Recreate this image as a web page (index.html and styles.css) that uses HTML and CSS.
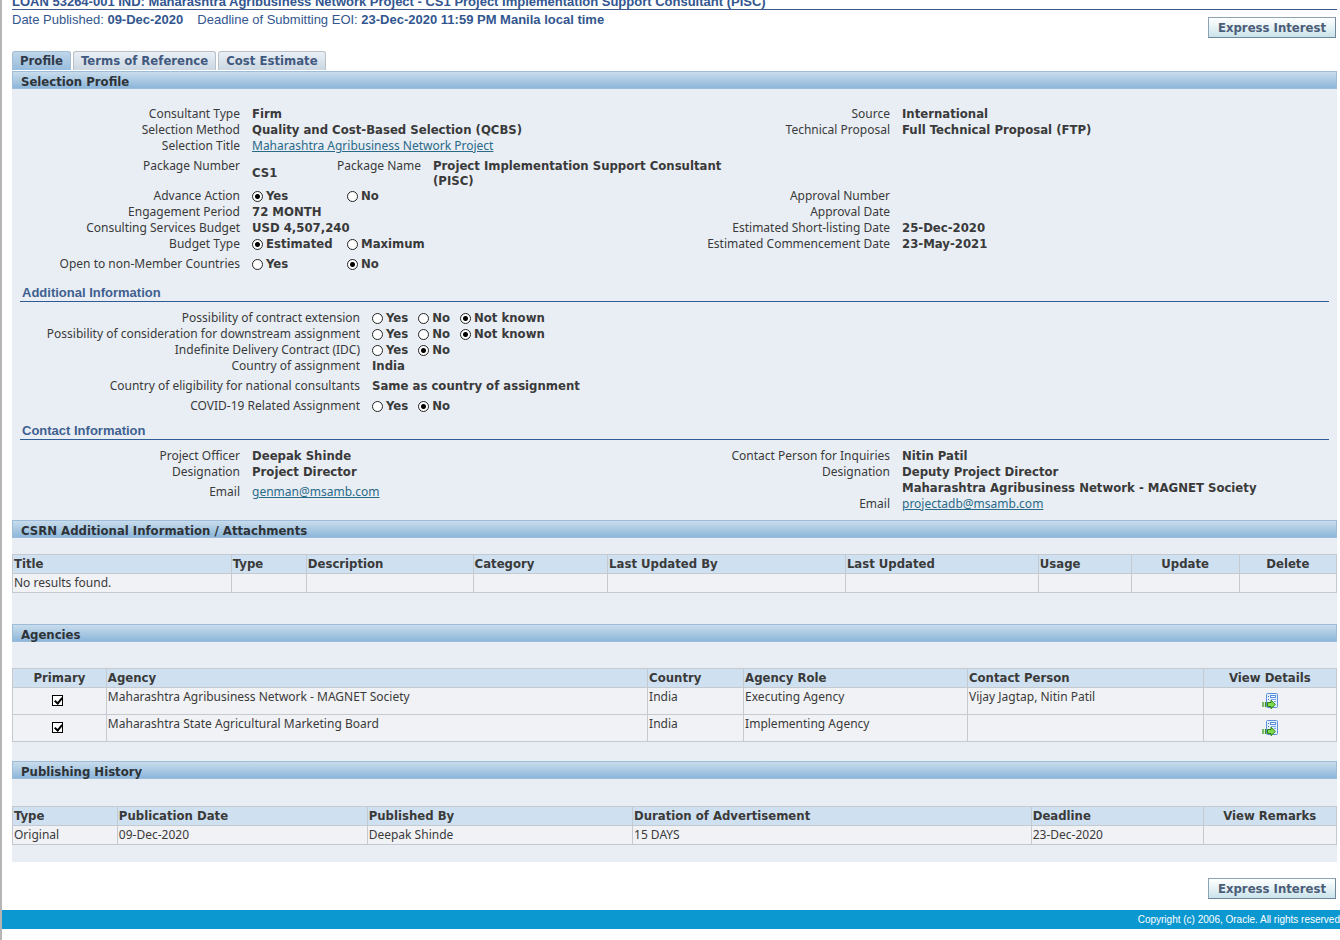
FILE: index.html
```html
<!DOCTYPE html>
<html lang="en">
<head>
<meta charset="utf-8">
<title>Consulting Services Recruitment Notice</title>
<link rel="stylesheet" href="styles.css">
</head>
<body>
<svg class="sprite" aria-hidden="true">
  <symbol id="details" viewBox="0 0 16 16">
    <rect x="4.5" y=".5" width="11" height="14" rx="1" fill="#e3f0fd" stroke="#5b8fe0"/>
    <path d="M6 3.500h1M6 6.500h1" stroke="#3f6fc4"/>
    <rect x="8.500" y="2.500" width="5" height="2" fill="#fff" stroke="#5b8fe0"/>
    <path d="M9 6.500h5M12 8.500h2" stroke="#7fa8e6"/>
    <path d="M1 9v5M3.500 9v5" stroke="#3f9a1c" stroke-width="1.300"/>
    <path d="M5.500 9.500H9V7.200l4.300 4.300L9 15.700v-2.200H5.500z" fill="#7ddb4c" stroke="#2f7d14"/>
  </symbol>
</svg>
<div class="page">
  <main class="content">
    <h1 class="title">LOAN 53264-001 IND: Maharashtra Agribusiness Network Project - CS1 Project Implementation Support Consultant (PISC)</h1>
    <div class="summary">
      <p class="dates"><span>Date Published: <b>09-Dec-2020</b></span><span>Deadline of Submitting EOI: <b>23-Dec-2020 11:59 PM Manila local time</b></span></p>
      <button class="action" type="button">Express Interest</button>
    </div>
    <nav class="tabs">
      <button class="tab tab-active" type="button">Profile</button>
      <button class="tab" type="button">Terms of Reference</button>
      <button class="tab" type="button">Cost Estimate</button>
    </nav>
    <div class="panel">
      <h2 class="bar">Selection Profile</h2>
      <div class="fields profile">
        <span class="label">Consultant Type</span><span class="value">Firm</span>
        <span class="label">Source</span><span class="value">International</span>
        <span class="label">Selection Method</span><span class="value">Quality and Cost-Based Selection (QCBS)</span>
        <span class="label">Technical Proposal</span><span class="value">Full Technical Proposal (FTP)</span>
        <span class="label">Selection Title</span><span class="value wide"><a href="#">Maharashtra Agribusiness Network Project</a></span>
        <span class="label spaced">Package Number</span>
        <div class="package wide spaced"><span class="value code">CS1</span><span class="label">Package Name</span><span class="value name">Project Implementation Support Consultant (PISC)</span></div>
        <span class="label">Advance Action</span>
        <div class="options paired"><label><input type="radio" name="advance" checked>Yes</label><label><input type="radio" name="advance">No</label></div>
        <span class="label">Approval Number</span><span class="value"></span>
        <span class="label">Engagement Period</span><span class="value">72 MONTH</span>
        <span class="label">Approval Date</span><span class="value"></span>
        <span class="label">Consulting Services Budget</span><span class="value">USD 4,507,240</span>
        <span class="label">Estimated Short-listing Date</span><span class="value">25-Dec-2020</span>
        <span class="label">Budget Type</span>
        <div class="options paired"><label><input type="radio" name="budget" checked>Estimated</label><label><input type="radio" name="budget">Maximum</label></div>
        <span class="label">Estimated Commencement Date</span><span class="value">23-May-2021</span>
        <span class="label spaced">Open to non-Member Countries</span>
        <div class="options paired wide spaced"><label><input type="radio" name="open">Yes</label><label><input type="radio" name="open" checked>No</label></div>
      </div>
      <h3 class="subhead">Additional Information</h3>
      <div class="fields additional">
        <span class="label">Possibility of contract extension</span>
        <div class="options"><label><input type="radio" name="extension">Yes</label><label><input type="radio" name="extension">No</label><label><input type="radio" name="extension" checked>Not known</label></div>
        <span class="label">Possibility of consideration for downstream assignment</span>
        <div class="options"><label><input type="radio" name="downstream">Yes</label><label><input type="radio" name="downstream">No</label><label><input type="radio" name="downstream" checked>Not known</label></div>
        <span class="label">Indefinite Delivery Contract (IDC)</span>
        <div class="options"><label><input type="radio" name="idc">Yes</label><label><input type="radio" name="idc" checked>No</label></div>
        <span class="label">Country of assignment</span><span class="value">India</span>
        <span class="label spaced">Country of eligibility for national consultants</span><span class="value spaced">Same as country of assignment</span>
        <span class="label spaced">COVID-19 Related Assignment</span>
        <div class="options spaced"><label><input type="radio" name="covid">Yes</label><label><input type="radio" name="covid" checked>No</label></div>
      </div>
      <h3 class="subhead">Contact Information</h3>
      <div class="contacts">
        <div class="fields officer">
          <span class="label">Project Officer</span><span class="value">Deepak Shinde</span>
          <span class="label">Designation</span><span class="value">Project Director</span>
          <span class="label spaced">Email</span><span class="value spaced"><a href="#">genman@msamb.com</a></span>
        </div>
        <div class="fields inquiries">
          <span class="label">Contact Person for Inquiries</span><span class="value">Nitin Patil</span>
          <span class="label">Designation</span><span class="value">Deputy Project Director<br>Maharashtra Agribusiness Network - MAGNET Society</span>
          <span class="label">Email</span><span class="value"><a href="#">projectadb@msamb.com</a></span>
        </div>
      </div>
      <h2 class="bar">CSRN Additional Information / Attachments</h2>
      <table class="grid attachments">
        <colgroup><col><col><col><col><col><col><col><col><col></colgroup>
        <thead><tr><th>Title</th><th>Type</th><th>Description</th><th>Category</th><th>Last Updated By</th><th>Last Updated</th><th>Usage</th><th class="mid">Update</th><th class="mid">Delete</th></tr></thead>
        <tbody><tr><td>No results found.</td><td></td><td></td><td></td><td></td><td></td><td></td><td></td><td></td></tr></tbody>
      </table>
      <h2 class="bar">Agencies</h2>
      <table class="grid agencies">
        <colgroup><col><col><col><col><col><col></colgroup>
        <thead><tr><th class="mid">Primary</th><th>Agency</th><th>Country</th><th>Agency Role</th><th>Contact Person</th><th class="mid">View Details</th></tr></thead>
        <tbody>
          <tr><td class="mid check"><input type="checkbox" aria-label="Primary" checked></td><td>Maharashtra Agribusiness Network - MAGNET Society</td><td>India</td><td>Executing Agency</td><td>Vijay Jagtap, Nitin Patil</td><td class="mid"><a class="icon" href="#" aria-label="View Details"><svg><use href="#details"/></svg></a></td></tr>
          <tr><td class="mid check"><input type="checkbox" aria-label="Primary" checked></td><td>Maharashtra State Agricultural Marketing Board</td><td>India</td><td>Implementing Agency</td><td></td><td class="mid"><a class="icon" href="#" aria-label="View Details"><svg><use href="#details"/></svg></a></td></tr>
        </tbody>
      </table>
      <h2 class="bar">Publishing History</h2>
      <table class="grid history">
        <colgroup><col><col><col><col><col><col></colgroup>
        <thead><tr><th>Type</th><th>Publication Date</th><th>Published By</th><th>Duration of Advertisement</th><th>Deadline</th><th class="mid">View Remarks</th></tr></thead>
        <tbody><tr><td>Original</td><td>09-Dec-2020</td><td>Deepak Shinde</td><td>15 DAYS</td><td>23-Dec-2020</td><td></td></tr></tbody>
      </table>
    </div>
    <div class="bottom"><button class="action" type="button">Express Interest</button></div>
  </main>
  <footer class="footer">Copyright (c) 2006, Oracle. All rights reserved</footer>
</div>
</body>
</html>
```
FILE: styles.css
```css
* { box-sizing: border-box; }
body {
  margin: 0;
  background: #fff;
  color: #3a3a3a;
  font: 12px/16px "Noto Sans", sans-serif;
}
h1, h2, h3, p { margin: 0; }
button { font: inherit; font-weight: bold; cursor: pointer; }
.bar, .value, .options, .grid th, .tab, .action { font-family: "DejaVu Sans Condensed", "Noto Sans", sans-serif; font-size: 13px; }
.sprite { display: none; }
.page { min-height: 100vh; overflow: hidden; border-left: 2px solid #b5b5b5; }
.content { padding: 0 3px 0 10px; }

.title {
  margin-top: -5px;
  border-bottom: 1px solid #3c5a8c;
  color: #33568f;
  font: bold 13px/14px "Liberation Sans", sans-serif;
  white-space: nowrap;
}
.summary { display: flex; justify-content: space-between; align-items: flex-start; padding: 2px 1px 0 0; }
.dates { display: flex; gap: 14px; color: #33568f; font: 13px/16px "Liberation Sans", sans-serif; }
.action {
  height: 21px;
  min-width: 128px;
  margin-top: 5px;
  padding: 0 8px;
  border: 1px solid #8ba3b4;
  border-right-color: #6f8798;
  border-bottom-color: #6f8798;
  background: linear-gradient(#fff, #e6f2f5 50%, #c9e3ea);
  color: #4c5d78;
  white-space: nowrap;
}

.tabs { display: flex; gap: 2px; margin-top: 13px; padding-bottom: 1px; }
.tab {
  height: 19px;
  padding: 0 7px;
  border: 1px solid #b9c0c8;
  border-bottom: 0;
  border-radius: 3px 3px 0 0;
  background: linear-gradient(#e9eff5, #cbd7e2);
  color: #42597f;
}
.tab-active { border-color: #a3bdd5; background: linear-gradient(#bfd6ea, #98bddd); color: #303a48; }

.panel { padding-bottom: 17px; background: #e9eef5; }
.bar {
  height: 18px;
  padding-left: 8px;
  border: 1px solid #9dbcd9;
  background: linear-gradient(#c8dcec, #abcae3 50%, #8db6da);
  color: #2e3338;
  line-height: 19px;
}

.fields { display: grid; column-gap: 12px; align-items: start; }
.profile { grid-template-columns: minmax(0, 228fr) minmax(0, 442fr) minmax(0, 184fr) minmax(0, 435fr); padding: 17px 0 13px; }
.additional { grid-template-columns: minmax(0, 348fr) minmax(0, 965fr); padding: 8px 0 9px; }
.contacts { display: grid; grid-template-columns: minmax(0, 682fr) minmax(0, 631fr); column-gap: 12px; padding: 8px 0; }
.officer { grid-template-columns: minmax(0, 228fr) minmax(0, 442fr); align-content: start; }
.inquiries { grid-template-columns: minmax(0, 184fr) minmax(0, 435fr); }
.label { text-align: right; white-space: nowrap; }
.value { font-weight: bold; }
.value a { display: block; color: #2a6a88; font: 12px/16px "Noto Sans", sans-serif; }
.wide { grid-column: 2 / -1; }
.spaced { margin-top: 4px; }
.package { display: flex; column-gap: 12px; }
.code { min-width: 73px; align-self: center; }
.name { max-width: 300px; line-height: 15px; }

.options { display: flex; gap: 10px; font-weight: bold; }
.options label { display: flex; align-items: center; gap: 3px; }
.paired { gap: 0; }
.paired label { min-width: 95px; }
input { appearance: none; margin: 0; background: #fff; border: 1px solid #222; width: 11px; height: 11px; }
input[type="radio"] { border-radius: 50%; }
input[type="radio"]:checked { background: radial-gradient(circle, #000 0 2px, #fff 3px); }

.subhead {
  margin: 0 8px;
  padding-left: 2px;
  border-bottom: 1px solid #2f5c94;
  color: #40608f;
  font: bold 13px/16px "Liberation Sans", sans-serif;
}

.grid { width: 100%; border-collapse: collapse; table-layout: fixed; }
.grid th, .grid td { height: 19px; padding: 1px; border: 1px solid #c5c9d0; text-align: left; vertical-align: top; }
.grid th { background: #cfe0f0; }
.grid td { background: #f1f2f5; }
.grid .mid { text-align: center; }
.attachments { margin: 16px 0 31px; }
.agencies { margin: 26px 0 19px; }
.history { margin-top: 27px; }
.agencies td { height: 27px; }
.grid .check { padding: 7px 4px 0 0; }
.check input { display: block; margin: 0 auto; position: relative; border-color: #000; }
.check input:checked::after {
  content: "";
  position: absolute;
  left: 3px;
  top: 0;
  width: 3px;
  height: 6px;
  border: solid #000;
  border-width: 0 2px 2px 0;
  transform: rotate(40deg);
}
.icon { display: block; padding-top: 4px; }
.icon svg { display: block; width: 16px; height: 16px; margin: 0 auto; }
.attachments col:nth-child(1) { width: 16.53%; }
.attachments col:nth-child(2) { width: 5.66%; }
.attachments col:nth-child(3) { width: 12.6%; }
.attachments col:nth-child(4) { width: 10.16%; }
.attachments col:nth-child(5) { width: 17.96%; }
.attachments col:nth-child(6) { width: 14.57%; }
.attachments col:nth-child(7) { width: 7.02%; }
.attachments col:nth-child(8) { width: 8.15%; }
.agencies col:nth-child(1) { width: 7.09%; }
.agencies col:nth-child(2) { width: 40.88%; }
.agencies col:nth-child(3) { width: 7.25%; }
.agencies col:nth-child(4) { width: 16.91%; }
.agencies col:nth-child(5) { width: 17.81%; }
.history col:nth-child(1) { width: 7.92%; }
.history col:nth-child(2) { width: 18.87%; }
.history col:nth-child(3) { width: 20.04%; }
.history col:nth-child(4) { width: 30.11%; }
.history col:nth-child(5) { width: 12.98%; }

.bottom { display: flex; justify-content: flex-end; padding: 11px 1px 11px 0; }
.footer {
  background: #0b98d1;
  color: #fff;
  font: 10px/19px "Liberation Sans", sans-serif;
  text-align: right;
  white-space: nowrap;
}
```
